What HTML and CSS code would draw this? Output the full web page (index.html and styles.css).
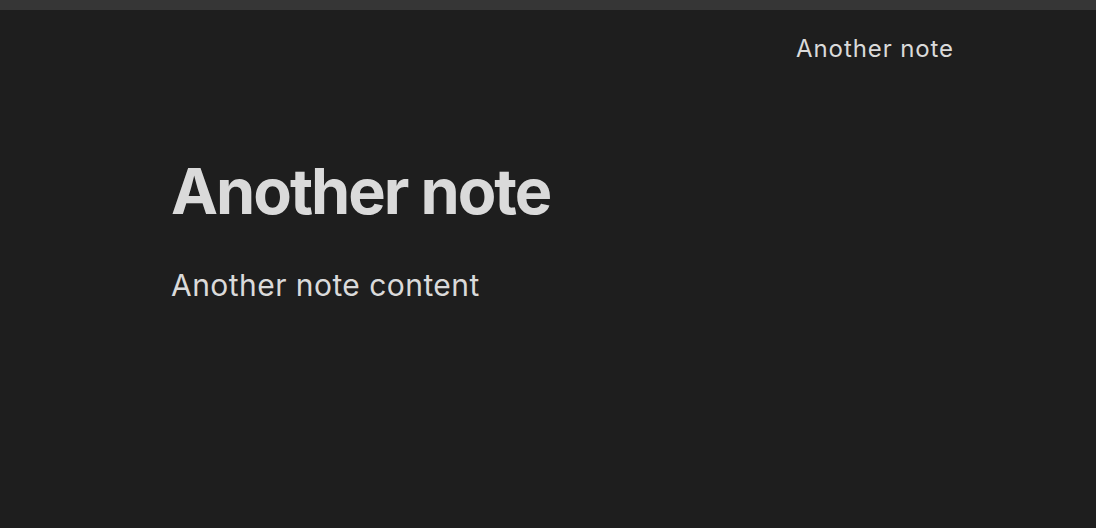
FILE: index.html
```html
<!DOCTYPE html>
<html lang="en">

<head>
    <meta charset="UTF-8">
    <meta name="viewport" content="width=device-width, initial-scale=1.0">
    <title>Another note</title>
    <link rel="stylesheet" href="styles.css">
</head>

<body>
    <div class="titlebar"></div>
    <div class="toolbar">
        <span class="tab-title">Another note</span>
    </div>
    <main class="note">
        <h1>Another note</h1>
        <p>Another note content</p>
    </main>
</body>

</html>
```

FILE: styles.css
```css
body {
    font-family: Inter, "Noto Sans", sans-serif;
    background-color: #1e1e1e;
    color: #dadada;
    margin: 0;
    padding: 0;
    height: 528px;
    overflow: hidden;
}

.titlebar {
    height: 10px;
    background-color: #363636;
}

.toolbar {
    display: flex;
    justify-content: flex-end;
    padding: 24px 142px 0 0;
    height: 39px;
}

.tab-title {
    font-size: 24px;
    letter-spacing: 0.9px;
    line-height: 30px;
}

.note {
    padding: 0 0 0 171px;
}

.note h1 {
    font-size: 63px;
    font-weight: 700;
    letter-spacing: -2px;
    margin: 80px 0 0;
    line-height: 76px;
}

.note p {
    font-size: 30px;
    letter-spacing: 0.45px;
    margin: 36px 0 0;
    line-height: 40px;
}
```
